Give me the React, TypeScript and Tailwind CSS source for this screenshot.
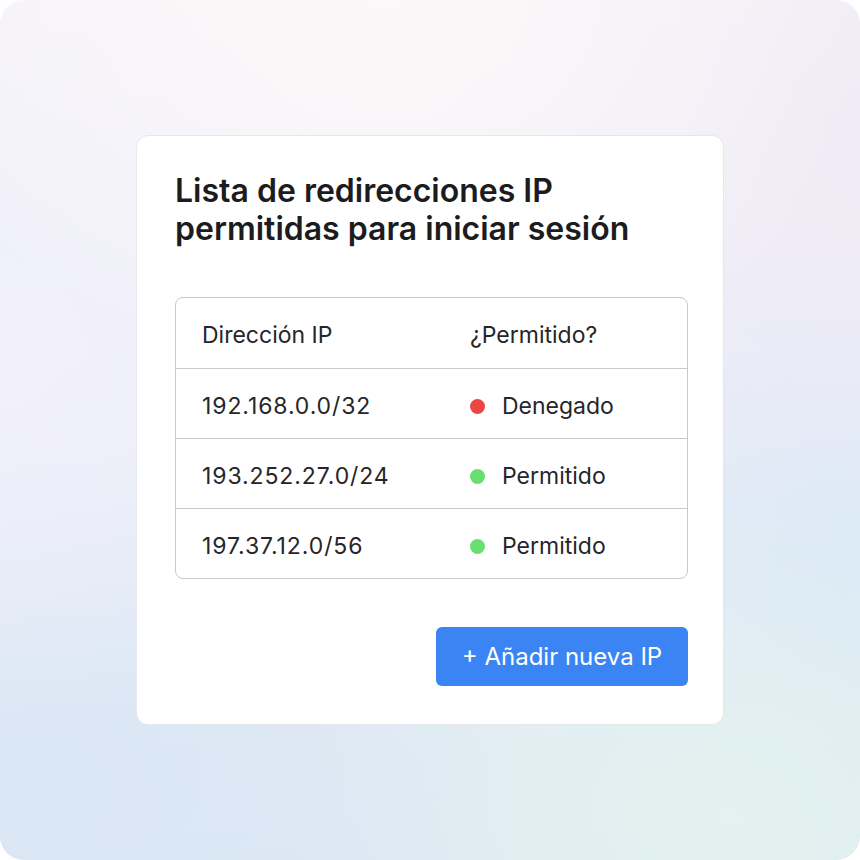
import React from "react";

const rows = [
  { ip: "192.168.0.0/32", ok: false },
  { ip: "193.252.27.0/24", ok: true },
  { ip: "197.37.12.0/56", ok: true },
];

export default function App() {
  return (
    <div className="w-[860px] h-[860px] bg-white" style={{ fontFamily: "Inter, 'Noto Sans', sans-serif" }}>
      <div className="w-full h-full rounded-[24px] overflow-hidden flex items-center justify-center bg-[#ebeef8] bg-[radial-gradient(ellipse_60%_45%_at_45%_0%,#fbf8f9_0%,rgba(251,248,249,0)_100%),radial-gradient(ellipse_50%_50%_at_100%_15%,#efeaf5_0%,rgba(239,234,245,0)_100%),radial-gradient(ellipse_45%_45%_at_0%_40%,#f1f0fb_0%,rgba(241,240,251,0)_100%),radial-gradient(ellipse_55%_40%_at_5%_90%,#d9e6f5_0%,rgba(217,230,245,0)_100%),radial-gradient(ellipse_50%_40%_at_85%_95%,#e3f2ef_0%,rgba(227,242,239,0)_100%),radial-gradient(ellipse_40%_40%_at_100%_65%,#d9e8f7_0%,rgba(217,232,247,0)_100%),linear-gradient(180deg,#f6f4f8_0%,#eceef8_50%,#dde9f3_100%)]">
        <div className="w-[588px] h-[590px] bg-white border border-[#e6e7ea] rounded-[12px] pl-[38px] pr-[35px] pt-[36px] flex flex-col">
          <h1 className="text-[32px] leading-[38px] font-semibold text-[#1c1c1e]">
            Lista de redirecciones IP
            <br />
            permitidas para iniciar sesión
          </h1>
          <div className="mt-[49px] border border-[#c9c9cb] rounded-[8px] text-[23px] text-[#26262a]">
            <div className="grid grid-cols-[268px_1fr] h-[70px] items-center pl-[26px] pt-[5px]">
              <div>Dirección IP</div>
              <div>¿Permitido?</div>
            </div>
            {rows.map((r) => (
              <div key={r.ip} className="grid grid-cols-[268px_1fr] h-[70px] items-center pl-[26px] pt-[6px] border-t border-[#c9c9cb]">
                <div className="tracking-[0.9px]">{r.ip}</div>
                <div className="flex items-center">
                  <span className={"w-[15px] h-[15px] rounded-full mr-[17px] " + (r.ok ? "bg-[#68e070]" : "bg-[#ec4545]")} />
                  <span>{r.ok ? "Permitido" : "Denegado"}</span>
                </div>
              </div>
            ))}
          </div>
          <div className="flex justify-end mt-[48px]">
            <button className="w-[252px] h-[59px] bg-[#3b84f3] rounded-[6px] text-white text-[24px]">
              + Añadir nueva IP
            </button>
          </div>
        </div>
      </div>
    </div>
  );
}
